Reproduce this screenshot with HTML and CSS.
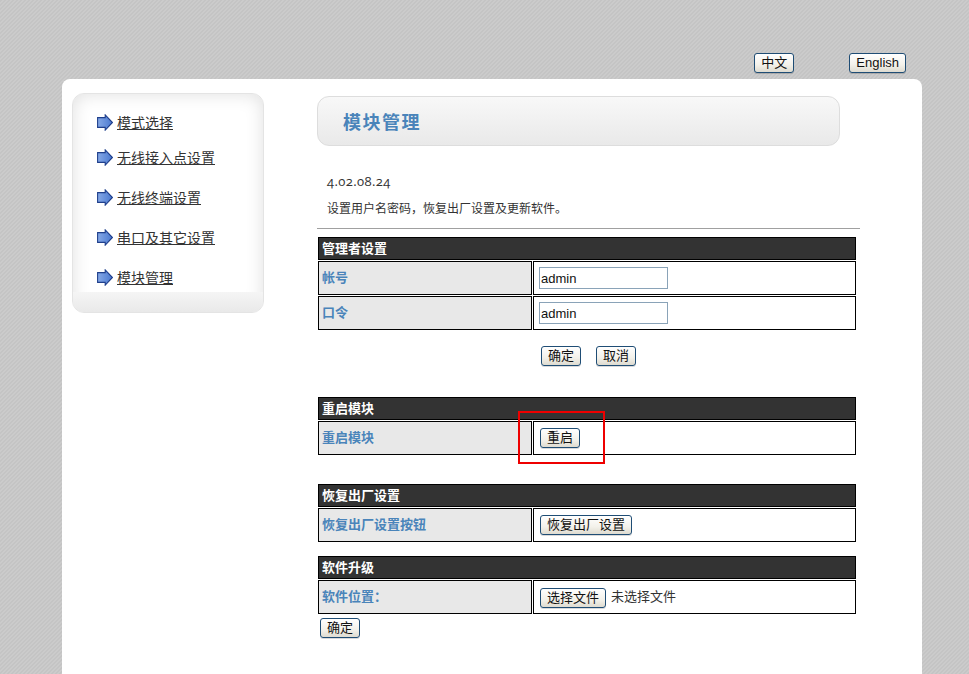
FILE: index.html
```html
<!DOCTYPE html>
<html lang="zh-CN">
<head>
<meta charset="utf-8">
<title>模块管理</title>
<link rel="stylesheet" href="styles.css">
</head>
<body>
<svg class="defs" width="0" height="0" aria-hidden="true">
  <defs>
    <linearGradient id="arrowFill" x1="0" y1="0" x2="1" y2="0">
      <stop offset="0" stop-color="#86a9e6"/>
      <stop offset="1" stop-color="#4a78cf"/>
    </linearGradient>
    <symbol id="arrow" viewBox="0 0 16 17">
      <path d="M0.6 3.6H8.2V0.9L15.4 8.5L8.2 16.1V13.4H0.6Z" fill="url(#arrowFill)" stroke="#1f3f8c" stroke-width="1.1"/>
    </symbol>
  </defs>
</svg>
<div class="page">
  <div class="lang">
    <button class="btn" type="button">中文</button>
    <button class="btn" type="button">English</button>
  </div>
  <div class="panel">
    <nav class="side">
      <ul class="menu">
        <li class="menu-item"><svg class="arrow"><use href="#arrow"/></svg><a class="menu-link" href="#">模式选择</a></li>
        <li class="menu-item"><svg class="arrow"><use href="#arrow"/></svg><a class="menu-link" href="#">无线接入点设置</a></li>
        <li class="menu-item menu-gap"><svg class="arrow"><use href="#arrow"/></svg><a class="menu-link" href="#">无线终端设置</a></li>
        <li class="menu-item menu-gap"><svg class="arrow"><use href="#arrow"/></svg><a class="menu-link" href="#">串口及其它设置</a></li>
        <li class="menu-item menu-gap"><svg class="arrow"><use href="#arrow"/></svg><a class="menu-link" href="#">模块管理</a></li>
      </ul>
      <div class="side-foot"></div>
    </nav>
    <main class="main">
      <h1 class="title">模块管理</h1>
      <p class="version">4.02.08.24</p>
      <p class="desc">设置用户名密码，恢复出厂设置及更新软件。</p>
      <div class="rule"></div>

      <table class="grid grid-first">
        <colgroup><col class="col-label"><col></colgroup>
        <tr><th class="head" colspan="2">管理者设置</th></tr>
        <tr><td class="label">帐号</td><td class="value"><input class="field" type="text" value="admin"></td></tr>
        <tr><td class="label">口令</td><td class="value"><input class="field" type="text" value="admin"></td></tr>
      </table>
      <div class="actions">
        <button class="btn" type="button">确定</button>
        <button class="btn" type="button">取消</button>
      </div>

      <div class="restart">
        <table class="grid">
          <colgroup><col class="col-label"><col></colgroup>
          <tr><th class="head" colspan="2">重启模块</th></tr>
          <tr><td class="label">重启模块</td><td class="value"><button class="btn btn-cell" type="button">重启</button></td></tr>
        </table>
        <div class="highlight"></div>
      </div>

      <table class="grid grid-factory">
        <colgroup><col class="col-label"><col></colgroup>
        <tr><th class="head" colspan="2">恢复出厂设置</th></tr>
        <tr><td class="label">恢复出厂设置按钮</td><td class="value"><button class="btn btn-cell" type="button">恢复出厂设置</button></td></tr>
      </table>

      <table class="grid grid-upgrade">
        <colgroup><col class="col-label"><col></colgroup>
        <tr><th class="head" colspan="2">软件升级</th></tr>
        <tr><td class="label">软件位置：</td><td class="value"><button class="btn btn-cell" type="button">选择文件</button><span class="file-name">未选择文件</span></td></tr>
      </table>
      <div class="submit"><button class="btn" type="button">确定</button></div>
    </main>
  </div>
</div>
</body>
</html>
```

FILE: styles.css
```css
* { box-sizing: border-box; }
html, body { margin: 0; padding: 0; }
body {
  font-family: "Liberation Sans", "Noto Sans CJK SC", sans-serif;
  font-size: 13px;
  color: #222;
}
.defs { display: block; width: 0; height: 0; }
.page {
  height: 100vh;
  overflow: hidden;
  display: flex;
  flex-direction: column;
  padding: 0 47px 0 62px;
  background-color: #cbcbcb;
  background-image: linear-gradient(135deg, #c4c4c4 25%, transparent 25%, transparent 50%, #c4c4c4 50%, #c4c4c4 75%, transparent 75%);
  background-size: 4px 4px;
}
.lang {
  height: 79px;
  flex: none;
  display: flex;
  justify-content: flex-end;
  align-items: flex-start;
  gap: 55px;
  padding: 53px 16px 0 0;
}
.btn {
  height: 20px;
  padding: 0 6px;
  border: 1px solid #1f4d75;
  border-radius: 3px;
  background: linear-gradient(#ffffff, #f3f1ea 60%, #dedbd0);
  font-family: inherit;
  font-size: 13px;
  line-height: 18px;
  color: #111;
  box-shadow: 0 1px 0 rgba(0, 0, 0, .15);
}
.panel {
  flex: 1;
  display: flex;
  align-items: flex-start;
  padding-left: 10px;
  background: #fff;
  border-radius: 8px 8px 0 0;
}
.side {
  width: 192px;
  margin-top: 14px;
  flex: none;
  border-radius: 12px;
  background: #fff;
  box-shadow: inset 0 0 18px rgba(0, 0, 0, .13);
  border: 1px solid #e4e4e4;
  overflow: hidden;
}
.menu {
  list-style: none;
  margin: 0;
  padding: 11px 0 0 24px;
}
.menu-item {
  height: 35px;
  display: flex;
  align-items: center;
  gap: 4px;
}
.menu-gap { margin-top: 5px; }
.arrow { width: 16px; height: 17px; flex: none; }
.menu-link {
  font-size: 14px;
  line-height: 16px;
  color: #333;
  text-decoration: underline;
}
.side-foot {
  height: 20px;
  margin-top: -3px;
  background: linear-gradient(#f5f5f5, #e9e9e9);
}
.main {
  width: 543px;
  margin-left: 53px;
  padding-top: 17px;
  flex: none;
}
.title {
  width: 523px;
  height: 50px;
  margin: 0;
  padding: 4px 0 0 25px;
  border: 1px solid #dddddd;
  border-radius: 12px;
  background: linear-gradient(#f8f8f8, #e9e9e9);
  font-size: 18px;
  font-weight: 700;
  line-height: 44px;
  letter-spacing: 1.5px;
  color: #4a84ba;
}
.version {
  margin: 27px 0 0;
  padding-left: 10px;
  font-family: "Open Sans", sans-serif;
  font-variant-numeric: oldstyle-nums;
  font-size: 13px;
  line-height: 16px;
  letter-spacing: .4px;
  color: #333;
}
.desc {
  margin: 11px 0 0;
  padding: 2px 0 0 10px;
  font-size: 12px;
  line-height: 15px;
  color: #333;
}
.rule {
  height: 1px;
  margin-top: 11px;
  background: #a0a0a0;
}
.grid {
  width: 540px;
  table-layout: fixed;
  border-collapse: separate;
  border-spacing: 1px;
}
.col-label { width: 214px; }
.grid-first { margin-top: 7px; }
.grid-factory { margin-top: 27px; }
.grid-upgrade { margin-top: 12px; }
.head {
  height: 23px;
  padding: 0 3px;
  border: 1px solid #000;
  background: #333;
  font-size: 13px;
  font-weight: 700;
  line-height: 16px;
  text-align: left;
  color: #fff;
}
.label {
  height: 34px;
  padding: 0 3px 3px;
  border: 1px solid #000;
  background: #e8e8e8;
  font-size: 13px;
  font-weight: 700;
  color: #4a84ba;
}
.value {
  height: 34px;
  padding: 0 5px;
  border: 1px solid #000;
  background: #fff;
}
.field {
  display: block;
  width: 129px;
  height: 22px;
  padding: 0 1px;
  border: 1px solid #8aa3b8;
  font-family: "Liberation Sans", sans-serif;
  font-size: 13px;
  color: #111;
}
.btn-cell { margin-left: 1px; vertical-align: middle; }
.actions {
  display: flex;
  gap: 15px;
  margin-top: 15px;
  padding-left: 224px;
}
.restart {
  position: relative;
  margin-top: 30px;
}
.highlight {
  position: absolute;
  left: 201px;
  top: 15px;
  width: 87px;
  height: 53px;
  border: 2px solid #ee0000;
}
.file-name {
  margin-left: 5px;
  vertical-align: 1px;
  color: #333;
}
.submit {
  margin-top: 3px;
  padding-left: 3px;
}
```
